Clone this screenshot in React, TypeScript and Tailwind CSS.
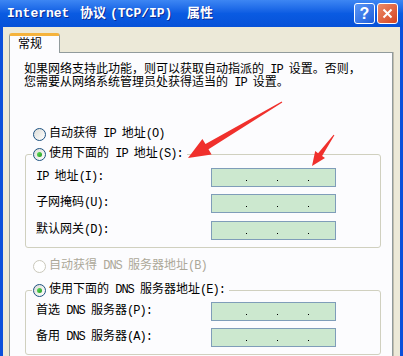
import { FC } from "react";

const font = "font-['Liberation_Mono','Noto_Sans_CJK_SC',monospace]";

// SimSun latin is half width, so pull ascii runs in a bit
const T: FC<{ text: string }> = ({ text }) => {
  const parts = text.match(/[\x20-\x7e]+|[^\x20-\x7e]+/g) ?? [];
  return (
    <>
      {parts.map((p, i) =>
        /^[\x20-\x7e]+$/.test(p) ? (
          <span key={i} className="tracking-[-1px]">
            {p}
          </span>
        ) : (
          <span key={i}>{p}</span>
        )
      )}
    </>
  );
};

interface RadioProps {
  checked?: boolean
  disabled?: boolean
}

const Radio: FC<RadioProps> = ({ checked, disabled }) => (
  <span
    className={`flex h-[13px] w-[13px] shrink-0 items-center justify-center rounded-full border ${
      disabled
        ? "border-[#CAC8BB] bg-white"
        : "border-[#1C5180] bg-linear-to-br from-[#DCDCD7] to-white"
    }`}
  >
    {checked && (
      <span className="h-[5px] w-[5px] rounded-full bg-linear-to-br from-[#61E05D] to-[#1E9A1E]" />
    )}
  </span>
);

// the ip box with its three dots
const IpBox: FC = () => (
  <div className="flex h-[19px] w-[125px] items-end gap-[30px] border border-[#7F9DB9] bg-[#CCE8CF] pb-[5px] pl-[34px]">
    <span className="h-[1px] w-[1px] bg-black" />
    <span className="h-[1px] w-[1px] bg-black" />
    <span className="h-[1px] w-[1px] bg-black" />
  </div>
);

const Field: FC<{ label: string; className?: string }> = ({ label, className }) => (
  <div className={`flex h-[19px] items-center ${className ?? ""}`}>
    <span className="w-[175px] text-[12px] leading-[13px] text-black">
      <T text={label} />
    </span>
    <IpBox />
  </div>
);

const App: FC = () => {
  return (
    <div className={`relative h-[356px] w-[403px] overflow-hidden bg-[#0A4FDB] ${font}`}>
      {/* title bar */}
      <div className="flex h-[27px] items-center bg-linear-to-b from-[#3D86F3] via-[#0A5BE2] to-[#0651D8] pl-[7px] pr-[5px]">
        <div className="flex flex-1 items-center text-[13px] font-bold leading-none text-white [text-shadow:1px_1px_0_#0B2C95]">
          <span className="w-[63px]">Internet</span>
          <span className="ml-[10px] w-[26px]">协议</span>
          <span className="ml-[4px] w-[63px]">(TCP/IP)</span>
          <span className="ml-[14px]">属性</span>
        </div>
        <div className="flex items-center gap-[2px]">
          <div className="flex h-[21px] w-[21px] items-center justify-center rounded-[3px] border border-white bg-linear-to-br from-[#5C97F6] to-[#1C5CDA] font-['Liberation_Sans',sans-serif] text-[16px] font-bold leading-none text-white">
            ?
          </div>
          <div className="flex h-[21px] w-[21px] items-center justify-center rounded-[3px] border border-white bg-linear-to-br from-[#EC8A67] to-[#D4411C]">
            <svg width="11" height="11" viewBox="0 0 11 11">
              <path d="M1.5 1.5 L9.5 9.5 M9.5 1.5 L1.5 9.5" stroke="white" strokeWidth="2" />
            </svg>
          </div>
        </div>
      </div>

      {/* dialog body */}
      <div className="mx-[3px] flex h-full flex-col bg-[#ECE9D8] pl-[6px] pr-[7px] pt-[6px]">
        {/* tab */}
        <div className="relative z-10 -mb-px flex h-[20px] w-[51px] items-center rounded-t-[3px] border-x border-t-[3px] border-x-[#919B9C] border-t-[#F5B33C] bg-[#FCFCFE] pl-[8px] text-[12px] leading-none text-black">
          常规
        </div>

        {/* panel */}
        <div className="flex-1 border border-[#919B9C] bg-[#FCFCFE] pl-[14px] pt-[11px] shadow-[1px_0_0_#C0BDAE]">
          <p className="text-[12px] leading-[13px] text-black">
            <T text="如果网络支持此功能，则可以获取自动指派的 IP 设置。否则，" />
            <br />
            <T text="您需要从网络系统管理员处获得适当的 IP 设置。" />
          </p>

          <div className="ml-[9px] mt-[34px] flex h-[20px] items-center gap-[3px] text-[12px] leading-none text-black">
            <Radio />
            <span>
              <T text="自动获得 IP 地址(O)" />
            </span>
          </div>

          <div className="ml-[1px] mt-[10px] w-[356px] rounded-[3px] border border-[#D0D0BF] pb-[7px] pl-[10px]">
            <div className="-ml-[4px] -mt-[11px] flex h-[20px] w-fit items-center gap-[3px] bg-[#FCFCFE] pl-[1px] pr-[4px] text-[12px] leading-none text-black">
              <Radio checked />
              <span>
                <T text="使用下面的 IP 地址(S):" />
              </span>
            </div>
            <Field label="IP 地址(I):" className="mt-[4px]" />
            <Field label="子网掩码(U):" className="mt-[7px]" />
            <Field label="默认网关(D):" className="mt-[8px]" />
          </div>

          <div className="ml-[9px] mt-[8px] flex h-[20px] items-center gap-[3px] text-[12px] leading-none text-[#ACA899]">
            <Radio disabled />
            <span>
              <T text="自动获得 DNS 服务器地址(B)" />
            </span>
          </div>

          <div className="ml-[1px] mt-[14px] w-[356px] rounded-[3px] border border-[#D0D0BF] pb-[7px] pl-[10px]">
            <div className="-ml-[4px] -mt-[11px] flex h-[20px] w-fit items-center gap-[3px] bg-[#FCFCFE] pl-[1px] pr-[4px] text-[12px] leading-none text-black">
              <Radio checked />
              <span>
                <T text="使用下面的 DNS 服务器地址(E):" />
              </span>
            </div>
            <Field label="首选 DNS 服务器(P):" className="mt-[2px]" />
            <Field label="备用 DNS 服务器(A):" className="mt-[7px]" />
          </div>
        </div>
      </div>

      {/* red arrows drawn on top of the screenshot */}
      <svg className="pointer-events-none absolute left-0 top-0" width="403" height="356" viewBox="0 0 403 356">
        <polygon
          points="281.7,101.6 205.5,144.1 202.4,139 188,158 211.6,154.5 208.5,149.3 282.3,102.4"
          fill="#F0302C"
        />
        <polygon
          points="333.6,134.7 318.1,153.2 315.2,151.1 312,166 325,158.1 322.1,156.1 334.4,135.3"
          fill="#F0302C"
        />
      </svg>
    </div>
  );
};

export default App;
